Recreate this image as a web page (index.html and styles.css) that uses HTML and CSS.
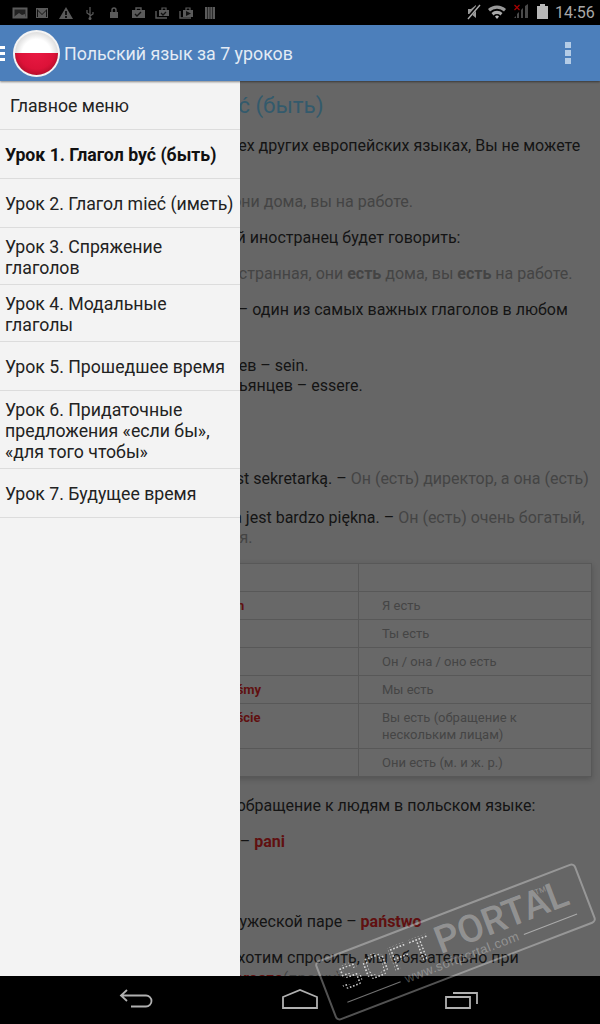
FILE: index.html
```html
<!DOCTYPE html>
<html lang="ru">
<head>
  <meta charset="UTF-8">
  <meta name="viewport" content="width=device-width, initial-scale=1.0">
  <title>Польский язык за 7 уроков</title>
  <link rel="stylesheet" href="styles.css">
</head>
<body>
  <div class="screen">
    <div class="status-bar">
      <svg class="status-left" width="225" height="25" viewBox="0 0 225 25">
        <!-- picture -->
        <rect x="13.5" y="8.5" width="13" height="9" fill="#222" stroke="#5a5a5a" stroke-width="2"/>
        <path d="M15 16l4-3 3 2 3-1v3h-10z" fill="#5a5a5a"/>
        <!-- mail -->
        <rect x="36" y="8" width="12" height="10" fill="#5a5a5a"/>
        <path d="M37 9l5 5 5-5v8h-1v-6l-4 4-4-4v6h-1z" fill="#111"/>
        <!-- warning -->
        <path d="M66 7l7 12h-14z" fill="#5a5a5a"/>
        <rect x="65" y="11" width="2" height="4" fill="#111"/>
        <rect x="65" y="16" width="2" height="2" fill="#111"/>
        <!-- usb -->
        <path d="M90 7v11M90 15l-3-2v-3M90 16l3-2v-2" fill="none" stroke="#5a5a5a" stroke-width="1.2"/>
        <circle cx="90" cy="18.5" r="1.5" fill="#5a5a5a"/>
        <!-- lock -->
        <rect x="110" y="12" width="8" height="6" fill="#5a5a5a"/>
        <path d="M112 12v-2a2 2 0 0 1 4 0v2" fill="none" stroke="#5a5a5a" stroke-width="1.4"/>
        <!-- bag with check -->
        <path d="M132 10h13v8h-13z" fill="#5a5a5a"/>
        <path d="M136 10V8h5v2" fill="none" stroke="#5a5a5a" stroke-width="1.4"/>
        <path d="M135 14l2 2 4-4" fill="none" stroke="#111" stroke-width="1.4"/>
        <!-- stacked bags -->
        <path d="M156 11v7h11" fill="none" stroke="#5a5a5a" stroke-width="1.4"/>
        <path d="M159 10h10v6h-10z" fill="#5a5a5a"/>
        <path d="M162 10V8h4v2" fill="none" stroke="#5a5a5a" stroke-width="1.2"/>
        <path d="M161 13l2 2 3-3" fill="none" stroke="#111" stroke-width="1.3"/>
        <!-- bags with play -->
        <path d="M180 11v7h11" fill="none" stroke="#5a5a5a" stroke-width="1.4"/>
        <path d="M183 10h10v7h-10z" fill="#5a5a5a"/>
        <path d="M186 10V8h4v2" fill="none" stroke="#5a5a5a" stroke-width="1.2"/>
        <path d="M186 11l5 2.5-5 2.5z" fill="#111"/>
        <!-- barcode -->
        <path d="M205 7h10v12h-10z" fill="#5a5a5a"/>
        <path d="M207.500 7v12M210 7v12M212.500 7v12" stroke="#2a2a2a"/>
      </svg>
      <div class="status-right">
        <svg width="90" height="25" viewBox="0 0 90 25">
          <!-- muted speaker -->
          <path d="M2 9h3l5-4v13l-5-4h-3z" fill="#999"/>
          <path d="M1 19L13 5" stroke="#000" stroke-width="3"/>
          <path d="M2 19L14 5" stroke="#aaa" stroke-width="1.4"/>
          <!-- wifi -->
          <path d="M22 9a13 13 0 0 1 18 0l-2 2.500a10 10 0 0 0-14 0z" fill="#999"/>
          <path d="M25.500 13a8 8 0 0 1 11 0l-2 2.500a5 5 0 0 0-7 0z" fill="#aaa"/>
          <path d="M29 16.500a3 3 0 0 1 4 0l-2 2.500z" fill="#bbb"/>
          <!-- signal -->
          <path d="M48 18l2-2v2zM51 18v-4l2-2v6zM55 18v-8l2-2v10z" fill="#4a4a4a"/>
          <path d="M59 18v-12l3-2v14z" fill="#4a4a4a"/>
          <path d="M48.500 5l5 5M53.500 5l-5 5" stroke="#a00" stroke-width="1.200"/>
          <!-- battery -->
          <path d="M71 6h3V4h5v2h3v13h-11z" fill="#b8b8b8"/>
        </svg>
        <span class="clock">14:56</span>
      </div>
    </div>

    <div class="app-bar">
      <div class="burger"><span></span><span></span><span></span></div>
      <svg class="flag" width="47" height="47" viewBox="0 0 47 47">
        <defs>
          <radialGradient id="flagWhite" cx="50%" cy="50%" r="55%">
            <stop offset="60%" stop-color="#fff"/>
            <stop offset="100%" stop-color="#d4d4d4"/>
          </radialGradient>
          <radialGradient id="flagRed" cx="50%" cy="45%" r="55%">
            <stop offset="0%" stop-color="#ea1a44"/>
            <stop offset="75%" stop-color="#dc1238"/>
            <stop offset="100%" stop-color="#b80e2c"/>
          </radialGradient>
          <clipPath id="flagLower"><rect x="0" y="23" width="47" height="24"/></clipPath>
        </defs>
        <circle cx="23.500" cy="23.500" r="23.500" fill="#f4f4f4"/>
        <circle cx="23.500" cy="23.500" r="21.500" fill="url(#flagWhite)"/>
        <circle cx="23.500" cy="23.500" r="21.500" fill="url(#flagRed)" clip-path="url(#flagLower)"/>
      </svg>
      <div class="app-title">Польский язык за 7 уроков</div>
      <div class="overflow"><span></span><span></span><span></span></div>
    </div>

    <div class="main">
      <div class="lesson">
        <h1>Урок 1. Глагол być (быть)</h1>
        <p class="in-5">Без глагола «быть», как и во всех других европейских языках, Вы не можете<br>обойтись.</p>
        <p class="note in-21">Я иностранец, она иностранная, они дома, вы на работе.</p>
        <p class="in17">Именно так примерно любой иностранец будет говорить:</p>
        <p class="note in-12">Я есть иностранец, она есть иностранная, они <b>есть</b> дома, вы <b>есть</b> на работе.</p>
        <p class="in13">Итак, наш глагол być «быть» – один из самых важных глаголов в любом<br>языке.</p>
        <p class="tight"><span class="in-7">У англичан – to be, а вот у немцев – sein.</span><span class="in30">И наконец, конечно, у итальянцев – essere.</span></p>
        <p class="pair in-8">On jest dyrektorem firmy, a ona jest sekretarką. – <span class="note">Он (есть) директор, а она (есть)</span><br><span class="note">секретарь.</span></p>
        <p class="last in-9">On jest bardzo bogaty, a jego żona jest bardzo piękna. – <span class="note">Он (есть) очень богатый,</span><span class="note in-10">а его жена (есть) очень красивая.</span></p>

        <table class="verbs">
          <tr><td></td><td></td></tr>
          <tr><td><b>Ja jestem</b></td><td>Я есть</td></tr>
          <tr><td><b>Ty jesteś</b></td><td>Ты есть</td></tr>
          <tr><td><b>On jest</b></td><td>Он / она / оно есть</td></tr>
          <tr><td><b>My jesteśmy</b></td><td>Мы есть</td></tr>
          <tr><td><b>Wy jesteście</b></td><td>Вы есть (обращение к<br>нескольким лицам)</td></tr>
          <tr><td><b>Oni są</b></td><td>Они есть (м. и ж. р.)</td></tr>
        </table>

        <p class="after-table in-4">Теперь рассмотрим вежливое обращение к людям в польском языке:</p>
        <p class="in-1">К госпоже, к женщине вообще – <b class="pl">pani</b></p>
        <p class="filler">К господину – pan</p>
        <p class="in19">Если обращение к этой супружеской паре – <b class="pl">państwo</b></p>
        <p class="in15">Кроме того, когда мы очень хотим спросить, мы обязательно при<br>употреблять вежливое слово <b class="pl">proszę</b><span class="note">(прошу)</span></p>
      </div>

      <nav class="drawer">
        <div class="drawer-item drawer-head">Главное меню</div>
        <div class="drawer-item current">Урок 1. Глагол być (быть)</div>
        <div class="drawer-item">Урок 2. Глагол mieć (иметь)</div>
        <div class="drawer-item multi">Урок 3. Спряжение глаголов</div>
        <div class="drawer-item multi">Урок 4. Модальные глаголы</div>
        <div class="drawer-item">Урок 5. Прошедшее время</div>
        <div class="drawer-item multi">Урок 6. Придаточные предложения «если бы», «для того чтобы»</div>
        <div class="drawer-item">Урок 7. Будущее время</div>
      </nav>
    </div>

    <div class="nav-bar">
      <svg width="40" height="24" viewBox="0 0 40 24">
        <path d="M9 2L3 7.500l6 5.500M3 7.500h25a5 5 0 0 1 0 11h-15" fill="none" stroke="#b0b0b0" stroke-width="1.800"/>
      </svg>
      <svg width="40" height="24" viewBox="0 0 40 24">
        <path d="M3 9L20 2l17 7v11H3z" fill="none" stroke="#b0b0b0" stroke-width="1.800"/>
      </svg>
      <svg width="40" height="24" viewBox="0 0 40 24">
        <path d="M4 9h24v11H4z" fill="none" stroke="#b0b0b0" stroke-width="1.800"/>
        <path d="M11 5h24v11" fill="none" stroke="#b0b0b0" stroke-width="1.800"/>
      </svg>
    </div>

    <div class="watermark">
      <div class="wm-logo">
        <span class="wm-soft">SOFT</span><span class="wm-portal">PORTAL</span><span class="wm-tm">TM</span>
      </div>
      <div class="wm-url">
        <span class="wm-rule"></span><span>www.softportal.com</span><span class="wm-rule"></span>
      </div>
    </div>
  </div>
</body>
</html>
```

FILE: styles.css
```css
html, body {
  margin: 0;
  padding: 0;
  background-color: #000;
}
.screen {
  width: 600px;
  height: 1024px;
  display: flex;
  flex-direction: column;
  position: relative;
  overflow: hidden;
  font-family: Roboto, "Noto Sans", sans-serif;
}
.status-bar {
  height: 25px;
  flex-shrink: 0;
  background-color: #000;
  display: flex;
  justify-content: space-between;
}
.status-right {
  display: flex;
  align-items: center;
  padding-right: 5px;
}
.status-right svg {
  margin-right: -1px;
}
.clock {
  font-size: 16px;
  color: #a8a8a8;
  width: 40px;
}
.app-bar {
  height: 56px;
  flex-shrink: 0;
  background-color: #4c7fbb;
  display: flex;
  align-items: center;
  position: relative;
  z-index: 3;
  box-shadow: 0 1px 2px rgba(0, 0, 0, 0.45);
}
.burger {
  width: 5px;
  display: flex;
  flex-direction: column;
  gap: 3px;
  margin-right: 8px;
}
.burger span {
  height: 3px;
  background-color: #fff;
}
.flag {
  flex-shrink: 0;
}
.app-title {
  font-size: 17.800px;
  color: #e3ebf5;
  margin-left: 4px;
  flex: 1;
}
.overflow {
  width: 6px;
  display: flex;
  flex-direction: column;
  gap: 2px;
  margin-right: 29px;
}
.overflow span {
  height: 6px;
  background-color: #b4cce6;
}
.main {
  flex: 1;
  position: relative;
  overflow: hidden;
  background-color: #666;
}
.lesson {
  padding: 0 8px;
  font-size: 16px;
  line-height: 20.500px;
  color: #141414;
  white-space: nowrap;
}
.lesson h1 {
  margin: 0;
  padding: 13px 0 19.500px 52px;
  font-size: 22.400px;
  line-height: 22px;
  font-weight: 400;
  color: #335a6c;
}
.lesson p {
  margin: 0 0 15.500px;
}
.note {
  color: #444;
}
/* the lines run on under the drawer, these line their ends up */
.in-21 { text-indent: -21px; }
.in-12 { text-indent: -12px; }
.in-10 { text-indent: -10px; }
.in-9 { text-indent: -9px; }
.in-8 { text-indent: -8px; }
.in-7 { text-indent: -7px; }
.in-5 { text-indent: -5px; }
.in-4 { text-indent: -4px; }
.in-1 { text-indent: -1px; }
.in13 { text-indent: 13px; }
.in15 { text-indent: 15px; }
.in17 { text-indent: 17px; }
.in19 { text-indent: 19px; }
.in30 { text-indent: 30px; }
.lesson .tight {
  margin-top: -0.500px;
  margin-bottom: 73.500px;
  line-height: 19.500px;
}
.tight span, .last span.in-10 {
  display: block;
}
.lesson .pair {
  margin-bottom: 0;
  line-height: 19.500px;
}
.lesson .last {
  margin-bottom: 14.500px;
}
.lesson .filler {
  margin-bottom: 23.500px;
}
.pl {
  color: #601010;
}
.verbs {
  width: 584px;
  border-collapse: collapse;
  font-size: 13px;
  line-height: 17px;
  color: #454545;
  background-color: #686868;
  box-shadow: 0 2px 6px rgba(0, 0, 0, 0.2);
}
.verbs td {
  border: 1px solid #585858;
  padding: 5px 0 5px 23px;
  vertical-align: top;
  height: 17px;
}
.verbs td:first-child {
  width: 171px;
  padding-left: 178px;
}
.verbs b {
  color: #601010;
}
.lesson .after-table {
  margin-top: 19px;
}
.drawer {
  position: absolute;
  left: 0;
  top: 0;
  bottom: 0;
  width: 240px;
  background-color: #f3f3f3;
  z-index: 2;
}
.drawer-item {
  box-sizing: border-box;
  min-height: 49px;
  display: flex;
  align-items: center;
  padding: 8px 5px 6px;
  font-size: 17.700px;
  line-height: 21px;
  color: #222;
  border-bottom: 1px solid #dcdcdc;
}
.multi {
  padding: 9px 5px 5px;
}
.drawer-head {
  padding-left: 10px;
}
.current {
  font-weight: bold;
  color: #111;
}
.nav-bar {
  height: 48px;
  flex-shrink: 0;
  background-color: #000;
  display: flex;
  justify-content: center;
  align-items: center;
  gap: 122px;
  position: relative;
  z-index: 3;
}
/* softportal stamp lies over everything */
.watermark {
  position: absolute;
  left: 316px;
  top: 910px;
  width: 279px;
  height: 64px;
  box-sizing: border-box;
  border: 2.500px solid rgba(255, 255, 255, 0.32);
  border-radius: 5px;
  transform: rotate(-21deg);
  z-index: 5;
  display: flex;
  flex-direction: column;
  padding: 8px 14px 0 15px;
  color: rgba(255, 255, 255, 0.3);
  font-family: "Liberation Sans", Arial, sans-serif;
}
.wm-logo {
  display: flex;
  align-items: baseline;
  height: 30px;
  line-height: 30px;
}
.wm-soft {
  font-size: 36px;
  font-weight: bold;
  letter-spacing: 1px;
  color: transparent;
  background-image: radial-gradient(circle, #fff 1.100px, transparent 1.300px);
  background-size: 3.400px 3.400px;
  -webkit-background-clip: text;
  background-clip: text;
  opacity: 0.7;
}
.wm-portal {
  font-family: Roboto, sans-serif;
  font-size: 38px;
  font-weight: 500;
  margin-left: 4px;
}
.wm-tm {
  font-size: 8px;
  align-self: flex-start;
  line-height: 10px;
  margin-left: -30px;
}
.wm-url {
  display: flex;
  align-items: center;
  gap: 5px;
  font-size: 13px;
  letter-spacing: 0.5px;
  line-height: 14px;
  margin-top: 2px;
}
.wm-rule {
  flex: 1;
  height: 1px;
  background-color: rgba(255, 255, 255, 0.45);
}
```
